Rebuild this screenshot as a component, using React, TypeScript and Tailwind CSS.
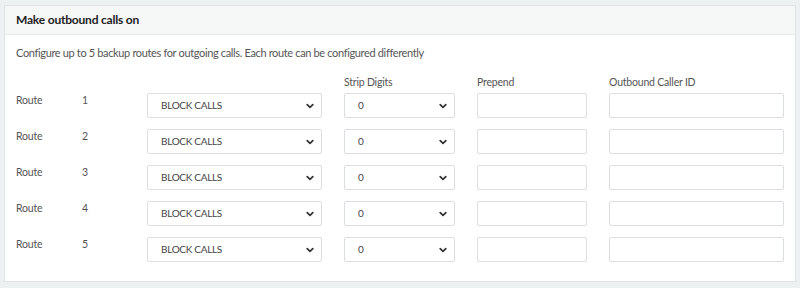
const ROUTES = [1, 2, 3, 4, 5];

function Chevron() {
  return (
    <svg className="h-[6px] w-[8px] shrink-0" viewBox="0 0 8 6" fill="none">
      <path d="M1.2 1.6l2.8 2.8 2.8-2.8" stroke="#333" strokeWidth={1.7} strokeLinecap="round" strokeLinejoin="round" />
    </svg>
  );
}

function FakeSelect({ value, width }: { value: string; width: string }) {
  return (
    <div
      className={`${width} h-[25px] flex items-center justify-between pl-[13px] pr-[7px] border border-[#dcdfe1] rounded-[2px] bg-white text-[10px] tracking-[-0.3px] text-[#444]`}
    >
      <span>{value}</span>
      <Chevron />
    </div>
  );
}

export default function App() {
  return (
    <div
      className="w-[800px] h-[288px] bg-[#eef1f2] pt-[5px] px-[4px]"
      style={{ fontFamily: "Lato, 'Open Sans', sans-serif" }}
    >
      <div className="w-[792px] h-[277px] bg-white border border-[#e1e4e6]">
        {/* Header */}
        <div className="h-[29px] flex items-center px-[11px] bg-[#f6f7f7] border-b border-[#e6e8e9]">
          <h2 className="text-[12px] font-bold tracking-[-0.2px] text-[#222]">Make outbound calls on</h2>
        </div>

        <div className="px-[11px] pt-[10px]">
          <p className="text-[11px] leading-[16px] tracking-[-0.35px] text-[#555]">
            Configure up to 5 backup routes for outgoing calls. Each route can be configured differently
          </p>

          {/* Column labels */}
          <div className="flex mt-[13px] mb-[3px] text-[10.5px] leading-[16px] tracking-[-0.2px] text-[#555]">
            <div className="w-[328px]" />
            <div className="w-[111px]">Strip Digits</div>
            <div className="w-[110px] ml-[22px]">Prepend</div>
            <div className="w-[175px] ml-[22px]">Outbound Caller ID</div>
          </div>

          {/* Routes */}
          <div className="flex flex-col gap-[11px]">
            {ROUTES.map((n) => (
              <div key={n} className="flex items-start">
                <div className="w-[66px] text-[10.5px] leading-[14px] tracking-[-0.2px] text-[#555]">Route</div>
                <div className="w-[65px] text-[10.5px] leading-[14px] text-[#555]">{n}</div>
                <FakeSelect value="BLOCK CALLS" width="w-[175px]" />
                <div className="ml-[22px]">
                  <FakeSelect value="0" width="w-[111px]" />
                </div>
                <div className="ml-[22px] w-[110px] h-[25px] border border-[#dcdfe1] rounded-[2px] bg-white" />
                <div className="ml-[22px] w-[175px] h-[25px] border border-[#dcdfe1] rounded-[2px] bg-white" />
              </div>
            ))}
          </div>
        </div>
      </div>
    </div>
  );
}
